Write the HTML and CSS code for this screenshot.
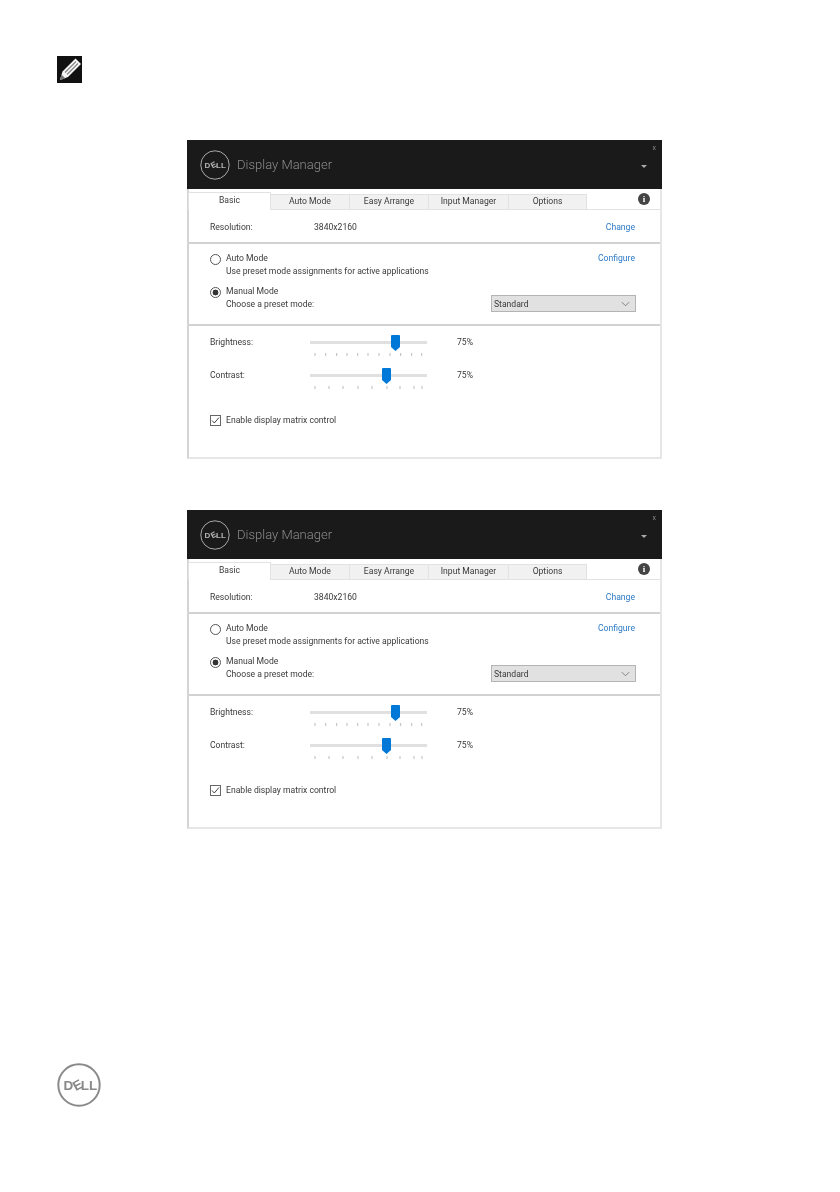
FILE: index.html
```html
<!DOCTYPE html>
<html lang="en">
<head>
<meta charset="utf-8">
<title>Dell Display Manager</title>
<link rel="stylesheet" href="styles.css">
</head>
<body>
<main class="page">
  <svg class="note-icon" viewBox="0 0 25 27" width="25" height="27" aria-hidden="true">
    <rect width="25" height="27" fill="#111"/>
    <path d="M3 24 L5.500 15.500 L18.500 2.500 L24 8 L11 21 Z" fill="#f6f6f6"/>
    <path d="M8 16.500 L19 5.500 M10 18.500 L21 7.500" stroke="#888" stroke-width="1.200" fill="none"/>
    <path d="M3 24 L4.500 18.500 L8.500 22.500 Z" fill="#777"/>
  </svg>

  <section class="dm first">
    <header class="dm-head">
      <svg class="dm-logo" viewBox="0 0 30 30" width="30" height="30" aria-hidden="true">
        <circle cx="15" cy="15" r="14.200" fill="none" stroke="#a8a8a8" stroke-width="1"/>
        <g class="logo-type light">
          <text x="4.600" y="17.800">D</text>
          <text x="11" y="17.800" transform="rotate(-28 13 15)">E</text>
          <text x="16" y="17.800">LL</text>
        </g>
      </svg>
      <h1 class="dm-title">Display Manager</h1>
      <span class="dm-close">x</span>
      <span class="dm-caret"></span>
    </header>
    <nav class="tabs">
      <span class="tab active">Basic</span>
      <span class="tab t2">Auto Mode</span>
      <span class="tab t3">Easy Arrange</span>
      <span class="tab t4">Input Manager</span>
      <span class="tab t5">Options</span>
      <span class="info">i</span>
    </nav>
    <div class="panel">
      <div class="row res">
        <span class="label">Resolution:</span>
        <span class="res-value">3840x2160</span>
        <a class="link">Change</a>
      </div>
      <div class="modes">
        <div class="mode-row">
          <span class="radio"></span>
          <div class="mode-text"><div>Auto Mode</div><div>Use preset mode assignments for active applications</div></div>
          <a class="link">Configure</a>
        </div>
        <div class="mode-row manual">
          <span class="radio on"></span>
          <div class="mode-text"><div>Manual Mode</div><div>Choose a preset mode:</div></div>
          <div class="select"><span>Standard</span>
            <svg viewBox="0 0 10 6" width="9" height="6" aria-hidden="true"><path d="M1 1l4 4 4-4" fill="none" stroke="#777" stroke-width="1"/></svg>
          </div>
        </div>
      </div>
      <div class="sliders">
        <div class="slider-row">
          <span class="label">Brightness:</span>
          <div class="slider">
            <span class="track"></span>
            <svg class="thumb b" viewBox="0 0 9 16" width="9" height="16" aria-hidden="true"><path d="M1 0H8Q9 0 9 1V12L4.500 16 0 12V1Q0 0 1 0Z" fill="#0078d7"/></svg>
            <svg class="ticks" viewBox="0 0 117 4" width="117" height="4" aria-hidden="true"><path d="M5 0v3M15.700 0v3M26.700 0v3M37 0v3M47.700 0v3M58 0v3M69 0v3M80 0v3M90.700 0v3M101.700 0v3M111.700 0v3" stroke="#bbb" stroke-width="1"/></svg>
          </div>
          <span class="pct">75%</span>
        </div>
        <div class="slider-row">
          <span class="label">Contrast:</span>
          <div class="slider">
            <span class="track"></span>
            <svg class="thumb c" viewBox="0 0 9 16" width="9" height="16" aria-hidden="true"><path d="M1 0H8Q9 0 9 1V12L4.500 16 0 12V1Q0 0 1 0Z" fill="#0078d7"/></svg>
            <svg class="ticks" viewBox="0 0 117 4" width="117" height="4" aria-hidden="true"><path d="M5 0v3M19 0v3M33 0v3M48 0v3M62 0v3M77 0v3M90 0v3M104 0v3M112 0v3" stroke="#bbb" stroke-width="1"/></svg>
          </div>
          <span class="pct">75%</span>
        </div>
        <div class="check-row">
          <svg class="check" viewBox="0 0 11 11" width="11" height="11" aria-hidden="true"><rect x=".5" y=".5" width="10" height="10" fill="#fff" stroke="#666"/><path d="M2 5.500l2.300 2.500L9 2.500" fill="none" stroke="#444" stroke-width="1"/></svg>
          <span>Enable display matrix control</span>
        </div>
      </div>
    </div>
  </section>

  <section class="dm second">
    <header class="dm-head">
      <svg class="dm-logo" viewBox="0 0 30 30" width="30" height="30" aria-hidden="true">
        <circle cx="15" cy="15" r="14.200" fill="none" stroke="#a8a8a8" stroke-width="1"/>
        <g class="logo-type light">
          <text x="4.600" y="17.800">D</text>
          <text x="11" y="17.800" transform="rotate(-28 13 15)">E</text>
          <text x="16" y="17.800">LL</text>
        </g>
      </svg>
      <h1 class="dm-title">Display Manager</h1>
      <span class="dm-close">x</span>
      <span class="dm-caret"></span>
    </header>
    <nav class="tabs">
      <span class="tab active">Basic</span>
      <span class="tab t2">Auto Mode</span>
      <span class="tab t3">Easy Arrange</span>
      <span class="tab t4">Input Manager</span>
      <span class="tab t5">Options</span>
      <span class="info">i</span>
    </nav>
    <div class="panel">
      <div class="row res">
        <span class="label">Resolution:</span>
        <span class="res-value">3840x2160</span>
        <a class="link">Change</a>
      </div>
      <div class="modes">
        <div class="mode-row">
          <span class="radio"></span>
          <div class="mode-text"><div>Auto Mode</div><div>Use preset mode assignments for active applications</div></div>
          <a class="link">Configure</a>
        </div>
        <div class="mode-row manual">
          <span class="radio on"></span>
          <div class="mode-text"><div>Manual Mode</div><div>Choose a preset mode:</div></div>
          <div class="select"><span>Standard</span>
            <svg viewBox="0 0 10 6" width="9" height="6" aria-hidden="true"><path d="M1 1l4 4 4-4" fill="none" stroke="#777" stroke-width="1"/></svg>
          </div>
        </div>
      </div>
      <div class="sliders">
        <div class="slider-row">
          <span class="label">Brightness:</span>
          <div class="slider">
            <span class="track"></span>
            <svg class="thumb b" viewBox="0 0 9 16" width="9" height="16" aria-hidden="true"><path d="M1 0H8Q9 0 9 1V12L4.500 16 0 12V1Q0 0 1 0Z" fill="#0078d7"/></svg>
            <svg class="ticks" viewBox="0 0 117 4" width="117" height="4" aria-hidden="true"><path d="M5 0v3M15.700 0v3M26.700 0v3M37 0v3M47.700 0v3M58 0v3M69 0v3M80 0v3M90.700 0v3M101.700 0v3M111.700 0v3" stroke="#bbb" stroke-width="1"/></svg>
          </div>
          <span class="pct">75%</span>
        </div>
        <div class="slider-row">
          <span class="label">Contrast:</span>
          <div class="slider">
            <span class="track"></span>
            <svg class="thumb c" viewBox="0 0 9 16" width="9" height="16" aria-hidden="true"><path d="M1 0H8Q9 0 9 1V12L4.500 16 0 12V1Q0 0 1 0Z" fill="#0078d7"/></svg>
            <svg class="ticks" viewBox="0 0 117 4" width="117" height="4" aria-hidden="true"><path d="M5 0v3M19 0v3M33 0v3M48 0v3M62 0v3M77 0v3M90 0v3M104 0v3M112 0v3" stroke="#bbb" stroke-width="1"/></svg>
          </div>
          <span class="pct">75%</span>
        </div>
        <div class="check-row">
          <svg class="check" viewBox="0 0 11 11" width="11" height="11" aria-hidden="true"><rect x=".5" y=".5" width="10" height="10" fill="#fff" stroke="#666"/><path d="M2 5.500l2.300 2.500L9 2.500" fill="none" stroke="#444" stroke-width="1"/></svg>
          <span>Enable display matrix control</span>
        </div>
      </div>
    </div>
  </section>

  <svg class="foot-logo" viewBox="0 0 44 44" width="44" height="44" aria-hidden="true">
    <circle cx="22" cy="22" r="20.700" fill="none" stroke="#8a8a8a" stroke-width="2"/>
    <g class="logo-type dark">
      <text x="6.600" y="27">D</text>
      <text x="16" y="27" transform="rotate(-28 20 22)">E</text>
      <text x="23.800" y="27">LL</text>
    </g>
  </svg>
</main>
</body>
</html>
```
FILE: styles.css
```css
* { box-sizing: border-box; }
html, body { margin: 0; background: #fff; }
.page {
  width: 840px;
  height: 1192px;
  padding: 56px 0 0 57px;
  display: flex;
  flex-direction: column;
  align-items: flex-start;
  font-family: Roboto, "Liberation Sans", sans-serif;
  color: #3a3a3a;
}
.note-icon { display: block; filter: blur(.6px); }
.dm {
  width: 475px;
  height: 319px;
  margin-left: 130px;
  display: flex;
  flex-direction: column;
  border-left: 2px solid #d4d4d4;
  border-right: 2px solid #e6e6e6;
  border-bottom: 2px solid #e6e6e6;
  font-size: 8.600px;
  line-height: 13px;
  filter: blur(.3px);
  background: #fff;
}
.first { margin-top: 57px; }
.second { margin-top: 51px; }
.dm-head {
  position: relative;
  height: 49px;
  margin: 0 -2px;
  background: #1a1a1a;
  display: flex;
  align-items: center;
  padding-left: 13px;
  flex: none;
}
.dm-logo { display: block; }
.logo-type text { font-family: "Liberation Sans", sans-serif; font-weight: 700; }
.logo-type.light text { font-size: 8px; fill: #b4b4b4; }
.logo-type.dark text { font-size: 13.500px; fill: #8a8a8a; }
.dm-title {
  margin: 0 0 0 7px;
  font-size: 13px;
  font-weight: 300;
  line-height: 20px;
  color: #8c8c8c;
}
.dm-close {
  position: absolute;
  right: 6px;
  top: 3px;
  font-size: 7px;
  line-height: 10px;
  color: #888;
}
.dm-caret {
  position: absolute;
  right: 15px;
  top: 25px;
  border: 3px solid transparent;
  border-top: 3px solid #aaa;
  border-bottom: 0;
}
.tabs {
  position: relative;
  flex: none;
  height: 20px;
  display: flex;
  align-items: flex-end;
}
.tab {
  height: 15px;
  background: #f1f1f1;
  border: 1px solid #e2e2e2;
  border-bottom: 0;
  margin-left: -1px;
  text-align: center;
  line-height: 13px;
}
.tab.active {
  position: relative;
  z-index: 1;
  width: 83px;
  height: 18px;
  background: #fff;
  line-height: 14px;
  margin-bottom: -1px;
}
.t2 { width: 80px; }
.t3 { width: 80px; }
.t4 { width: 81px; }
.t5 { width: 79px; }
.info {
  position: absolute;
  left: 449px;
  top: 4px;
  width: 12px;
  height: 12px;
  border-radius: 50%;
  background: #444;
  color: #fff;
  font: 700 9px/12px "Liberation Serif", serif;
  text-align: center;
}
.panel {
  flex: 1;
  border-top: 1px solid #e2e2e2;
  display: flex;
  flex-direction: column;
}
.row.res {
  height: 34px;
  display: grid;
  grid-template-columns: 104px 1fr auto;
  align-items: center;
  padding: 2px 25px 0 21px;
  border-bottom: 2px solid #d2d2d2;
}
.link { color: #2a79c6; }
.modes {
  height: 82px;
  padding: 8px 25px 0 21px;
  border-bottom: 2px solid #d2d2d2;
  display: flex;
  flex-direction: column;
  gap: 7px;
}
.mode-row {
  display: grid;
  grid-template-columns: 16px 1fr auto;
  align-items: start;
}
.radio {
  width: 11px;
  height: 11px;
  margin-top: 2px;
  border: 1px solid #555;
  border-radius: 50%;
  background: #fff;
}
.radio.on {
  background: radial-gradient(circle, #333 0 2.700px, #fff 3.200px);
}
.select {
  width: 145px;
  height: 17px;
  margin: 10px -1px 0 0;
  background: #e1e1e1;
  border: 1px solid #b4b4b4;
  display: flex;
  align-items: center;
  justify-content: space-between;
  padding: 1px 5px 0 2px;
}
.sliders {
  flex: 1;
  padding: 6px 0 0 21px;
  display: flex;
  flex-direction: column;
}
.slider-row {
  height: 33px;
  display: grid;
  grid-template-columns: 100px 117px auto;
  align-items: start;
  padding-top: 4px;
}
.slider { position: relative; height: 24px; }
.track {
  position: absolute;
  left: 0;
  right: 0;
  top: 5px;
  height: 3px;
  background: #e0e0e0;
}
.thumb { position: absolute; top: -1px; display: block; }
.thumb.b { left: 81px; }
.thumb.c { left: 72px; }
.ticks { position: absolute; left: 0; top: 17px; display: block; }
.pct { margin-left: 30px; }
.check-row {
  display: flex;
  align-items: center;
  gap: 5px;
  margin-top: 16px;
}
.check { display: block; flex: none; }
.foot-logo {
  display: block;
  margin-top: 234px;
  filter: blur(.3px);
}
```
